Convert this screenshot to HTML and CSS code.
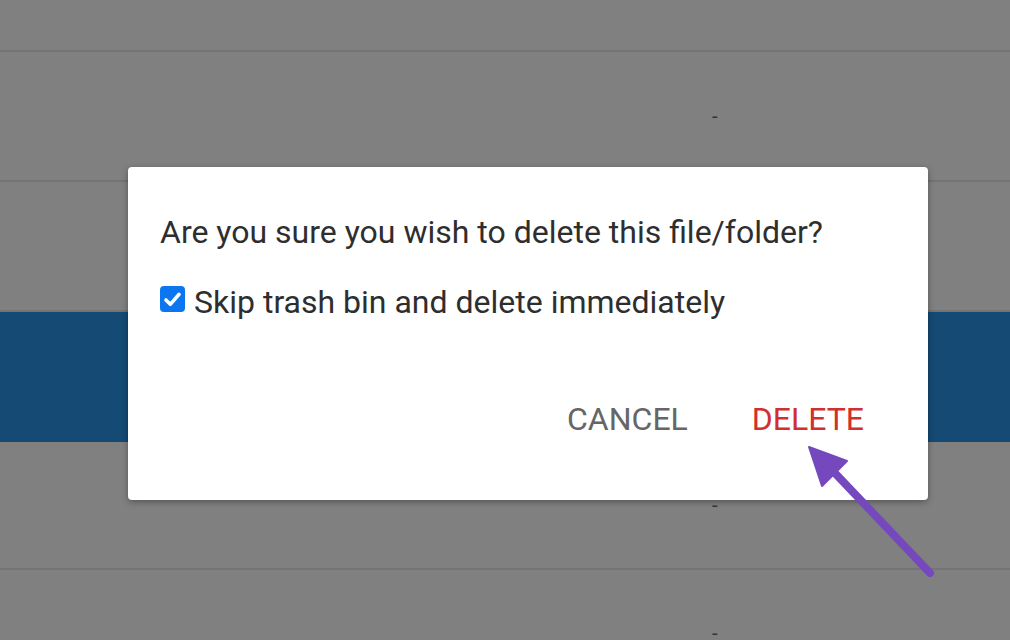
FILE: index.html
```html
<!DOCTYPE html>
<html>
<head>
<meta charset="utf-8">
<link rel="stylesheet" href="styles.css">
</head>
<body>
<div class="table">
  <div class="row r1"></div>
  <div class="row r2"><span class="dash">-</span></div>
  <div class="row r3"></div>
  <div class="row selected"></div>
  <div class="row r5"><span class="dash">-</span></div>
  <div class="row r6"><span class="dash last">-</span></div>
</div>

<div class="dialog">
  <p class="message">Are you sure you wish to delete this file/folder?</p>
  <label class="check">
    <span class="box"><svg viewBox="0 0 24 24" width="21" height="21"><path d="M4.5 12.5l5 5L19.5 6" fill="none" stroke="#fff" stroke-width="4" stroke-linecap="round" stroke-linejoin="round"/></svg></span>
    <span>Skip trash bin and delete immediately</span>
  </label>
  <div class="actions">
    <button class="btn cancel">CANCEL</button>
    <button class="btn delete">DELETE</button>
  </div>
</div>

<svg class="arrow" width="1010" height="640" viewBox="0 0 1010 640">
  <line x1="930" y1="573" x2="832" y2="470" stroke="#7549bd" stroke-width="8" stroke-linecap="round"/>
  <polygon points="809,447 822,486 847,461" fill="#7549bd" stroke="#7549bd" stroke-width="2" stroke-linejoin="round"/>
</svg>
</body>
</html>
```

FILE: styles.css
```css
html, body {
  margin: 0;
  padding: 0;
  width: 1010px;
  height: 640px;
  overflow: hidden;
  background: #808080;
  font-family: Roboto, "Liberation Sans", sans-serif;
}

.table {
  display: flex;
  flex-direction: column;
}

.row {
  border-bottom: 2px solid #747474;
  display: flex;
  align-items: center;
  position: relative;
  flex-shrink: 0;
}

.r1 { height: 50px; }
.r2 { height: 128px; }
.r3 { height: 128px; }
.selected { height: 130px; background: #154a75; border-bottom: 0; }
.r5 { height: 126px; }
.r6 { height: 68px; border-bottom: 0; align-items: flex-end; }

.dash {
  margin-left: 712px;
  color: #333;
  font-size: 20px;
  line-height: 20px;
}

.dash.last {
  line-height: 10px;
}

.dialog {
  position: absolute;
  left: 128px;
  top: 167px;
  width: 800px;
  height: 333px;
  box-sizing: border-box;
  background: #fff;
  border-radius: 4px;
  box-shadow: 0 2px 6px rgba(0,0,0,0.35);
  padding: 46px 32px 0 32px;
  display: flex;
  flex-direction: column;
  color: #2e2e2e;
}

.message {
  margin: 0;
  font-size: 32px;
  line-height: 38px;
}

.check {
  margin-top: 32px;
  display: flex;
  align-items: center;
  gap: 9px;
  font-size: 32px;
  line-height: 38px;
}

.box {
  width: 25px;
  height: 26px;
  border-radius: 4px;
  background: #0b76f0;
  display: flex;
  align-items: center;
  justify-content: center;
  margin-top: -6px;
}

.actions {
  margin-top: auto;
  margin-bottom: 61px;
  display: flex;
  justify-content: flex-end;
  gap: 64px;
  padding-right: 32px;
}

.btn {
  background: none;
  border: 0;
  padding: 0;
  font-family: Roboto, "Liberation Sans", sans-serif;
  font-size: 32px;
  line-height: 40px;
}

.cancel { color: #666666; }
.delete { color: #d0302f; }

.arrow {
  position: absolute;
  left: 0;
  top: 0;
}
```
